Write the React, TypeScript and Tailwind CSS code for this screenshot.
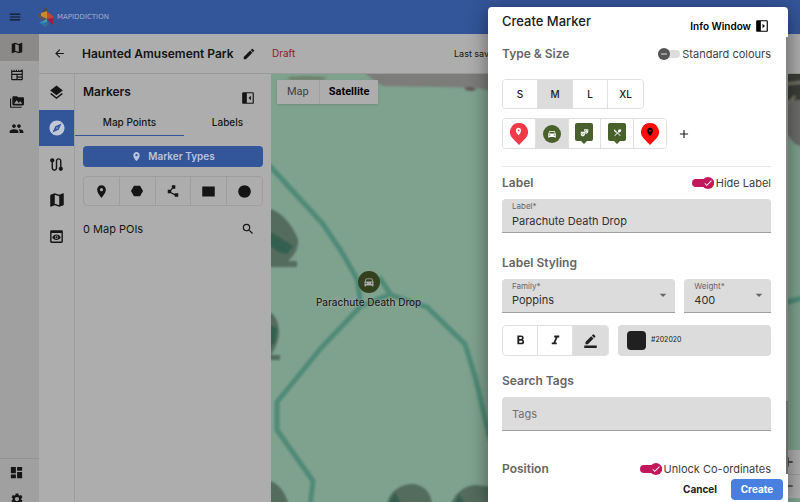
import React, { useState } from "react";
import {
  MdAdd,
  MdArrowBack,
  MdArrowDropDown,
  MdBorderColor,
  MdCheck,
  MdCircle,
  MdDashboard,
  MdEdit,
  MdExplore,
  MdFormatBold,
  MdFormatItalic,
  MdHexagon,
  MdLayers,
  MdMap,
  MdMenu,
  MdPeople,
  MdPermMedia,
  MdPlace,
  MdPolyline,
  MdPreview,
  MdRectangle,
  MdRemove,
  MdRestaurantMenu,
  MdRoute,
  MdSearch,
  MdSettings,
  MdTheaterComedy,
} from "react-icons/md";

interface SwitchProps {
  label: string;
  checked: boolean;
  onChange: (checked: boolean) => void;
}

function Switch({ label, checked, onChange }: SwitchProps) {
  return (
    <label className="relative flex cursor-pointer items-center gap-0.5 text-[11px] leading-[10px] text-[#404040]">
      <input
        type="checkbox"
        role="switch"
        checked={checked}
        onChange={(e) => onChange(e.target.checked)}
        className="peer absolute opacity-0"
      />
      {checked ? (
        <span className="flex h-2 w-[22px] items-center justify-end rounded-full bg-[#c2185b]">
          <span className="flex size-3 items-center justify-center rounded-full bg-[#c2185b] text-white">
            <MdCheck size={10} />
          </span>
        </span>
      ) : (
        <span className="flex h-2 w-[22px] items-center rounded-full bg-[#dcdcdc]">
          <span className="flex size-3 items-center justify-center rounded-full bg-[#555] text-white">
            <MdRemove size={10} />
          </span>
        </span>
      )}
      {label}
    </label>
  );
}

// 패널 접기/펼치기 아이콘
function PanelIcon({ flipped = false }: { flipped?: boolean }) {
  return (
    <svg viewBox="0 0 24 24" className="size-[14px]" fill="currentColor">
      <path
        fillRule="evenodd"
        d="M4 2h16a2 2 0 0 1 2 2v16a2 2 0 0 1-2 2H4a2 2 0 0 1-2-2V4a2 2 0 0 1 2-2Zm6 2v16h10V4H10Z"
      />
      <path d={flipped ? "M13 8l4 4-4 4V8Z" : "M17 8l-4 4 4 4V8Z"} />
    </svg>
  );
}

function CarIcon({ size }: { size: number }) {
  return (
    <svg viewBox="0 0 24 24" width={size} height={size} fill="currentColor" fillRule="evenodd">
      <path d="M18.92 6.01C18.72 5.42 18.16 5 17.5 5h-11c-.66 0-1.21.42-1.42 1.01L3 12v8c0 .55.45 1 1 1h1c.55 0 1-.45 1-1v-1h12v1c0 .55.45 1 1 1h1c.55 0 1-.45 1-1v-8l-2.08-5.99ZM6.5 16a1.500 1.500 0 1 1 0-3 1.500 1.500 0 0 1 0 3Zm11 0a1.500 1.500 0 1 1 0-3 1.500 1.500 0 0 1 0 3ZM5 11l1.500-4.500h11L19 11H5Z" />
    </svg>
  );
}

function PagesIcon() {
  return (
    <svg viewBox="0 0 24 24" className="size-[14px]" fill="currentColor" fillRule="evenodd">
      <path d="M2 3h2v2h2V3h2v2h2V3h2v2h2V3h2v2h2V3h4v16a2 2 0 0 1-2 2H4a2 2 0 0 1-2-2ZM4 7v3h16V7ZM4 12v7h7v-7ZM13 12v2.500h7V12ZM13 16.500V19h7v-2.500Z" />
    </svg>
  );
}

function Logo() {
  return (
    <svg viewBox="0 0 16 20" className="h-5 w-4" aria-hidden="true">
      <path d="M9 0v7L4 4Z" fill="#4a4a48" />
      <path d="M9 4v8L3 9V6Z" fill="#c98a2c" />
      <path d="M0 6l3 1v3l6 2-3 2-6-4Z" fill="#5d554c" />
      <path d="M9 5l5 3-5 4Z" fill="#c04b2a" />
      <path d="M14 8l1 1v4l-6-1Z" fill="#b8483a" />
      <path d="M9 12l6-1v7Z" fill="#a31944" />
      <path d="M1 16l8-4v4Z" fill="#3b9fc4" />
      <path d="M1 16l8-1-1 5Z" fill="#2676ac" />
      <path d="M9 14l2 3-3 3Z" fill="#56636e" />
    </svg>
  );
}

function MapBackground() {
  return (
    <svg
      viewBox="0 0 529 428"
      preserveAspectRatio="xMinYMin slice"
      className="absolute inset-0 h-full w-full"
      aria-hidden="true"
    >
      <defs>
        <filter id="soft">
          <feGaussianBlur stdDeviation="1" />
        </filter>
      </defs>
      <rect width="529" height="428" fill="#7fa28e" />
      <g filter="url(#soft)">
        <path d="M90-4h450v22H222l-14-4-34-1-62-1L100 4Z" fill="#7b7b7a" />
        <path d="M16 3l20-1 20 1-4 3H20Z" fill="#70806a" />
        <path d="M193 14l6-1 7 2-5 2-6-1Z" fill="#5f5550" />
        <path d="M514-4h20v30h-20Z" fill="#3a3c38" />
        <path d="M514 26h20v48l-10-4-10-12Z" fill="#6c6c6a" />
        <path d="M514 10l20-2M514 34l10-12" stroke="#777568" strokeWidth="3" />
        <g fill="#526c5d">
          <path d="M-4 134C10 136 22 152 27 165c1 10-5 18-10 22h9v6H-4Z" />
          <path d="M-4 236c8 4 12 12 12 22 0 10-6 20-8 23h9v5H-4Z" />
          <path d="M-4 406c10 2 18 10 22 26H-4Z" />
          <path d="M116 430c2-10 10-19 24-20 12 0 20 8 21 20Z" />
          <path d="M180 430c4-10 12-18 24-19l30 3v18Z" />
        </g>
        <g fill="#315e50">
          <path d="M-4 156l10 6 16 10-6 8-8-2-12-8Z" />
          <path d="M-4 250l10 4-2 14-8 8Z" />
          <path d="M118 430l6-12 6 12ZM184 430l4-10 6 10Z" />
        </g>
        <g
          fill="none"
          stroke="#4f8a78"
          strokeWidth="5"
          strokeLinejoin="round"
        >
          <path d="M-2 91l20 22 34 37 20 30 14 25 4 27L50 274 6 328v28l36 51-3 26" />
          <path d="M108 203l12 18 36 12 38 37 11 36 14 60M90 232l30-12" />
          <path d="M505 231l30-8" />
        </g>
      </g>
    </svg>
  );
}

function MarkerPin({ color, children }: { color: string; children: React.ReactNode }) {
  return (
    <span className="relative flex h-[22px] w-[18px] justify-center">
      <svg viewBox="0 0 18 22" className="absolute inset-0" fill={color}>
        <path d="M9 0a9 9 0 0 0-6.500 15.200L9 22l6.500-6.800A9 9 0 0 0 9 0Z" />
      </svg>
      <span className="relative mt-1">{children}</span>
    </span>
  );
}

function MarkerSquare({ children }: { children: React.ReactNode }) {
  return (
    <span className="relative flex h-[22px] w-[18px] justify-center text-white">
      <svg viewBox="0 0 18 22" className="absolute inset-0" fill="#48602c">
        <path d="M2 0h14a2 2 0 0 1 2 2v14a2 2 0 0 1-2 2h-4l-3 3-3-3H2a2 2 0 0 1-2-2V2a2 2 0 0 1 2-2Z" />
      </svg>
      <span className="relative mt-[5px]">{children}</span>
    </span>
  );
}

const navItems = [
  { label: "Maps", icon: <MdMap size={14} /> },
  { label: "Pages", icon: <PagesIcon /> },
  { label: "Media", icon: <MdPermMedia size={14} /> },
  { label: "People", icon: <MdPeople size={15} /> },
];

const toolItems = [
  { label: "Layers", icon: <MdLayers size={17} /> },
  { label: "Markers", icon: <MdExplore size={18} /> },
  { label: "Routes", icon: <MdRoute size={17} /> },
  { label: "Map style", icon: <MdMap size={18} /> },
  { label: "Preview", icon: <MdPreview size={17} /> },
];

const shapeItems = [
  { label: "Point", icon: <MdPlace size={15} /> },
  { label: "Polygon", icon: <MdHexagon size={14} /> },
  { label: "Line", icon: <MdPolyline size={14} /> },
  { label: "Rectangle", icon: <MdRectangle size={15} /> },
  { label: "Circle", icon: <MdCircle size={15} /> },
];

const markerItems = [
  { label: "Red pin", icon: <MarkerPin color="#f03a47"><MdPlace size={9} className="text-white" /></MarkerPin> },
  {
    label: "Car",
    icon: (
      <span className="flex size-[18px] items-center justify-center rounded-full bg-[#48602c] text-white">
        <CarIcon size={10} />
      </span>
    ),
  },
  { label: "Theatre", icon: <MarkerSquare><MdTheaterComedy size={9} /></MarkerSquare> },
  { label: "Restaurant", icon: <MarkerSquare><MdRestaurantMenu size={9} /></MarkerSquare> },
  { label: "Place", icon: <MarkerPin color="#ff0d0d"><MdPlace size={10} className="text-black" /></MarkerPin> },
];

function CreateMarkerDialog() {
  const [size, setSize] = useState("M");
  const [marker, setMarker] = useState("Car");
  const [standard, setStandard] = useState(false);
  const [hideLabel, setHideLabel] = useState(true);
  const [unlocked, setUnlocked] = useState(true);
  const [label, setLabel] = useState("Parachute Death Drop");

  return (
    <div
      role="dialog"
      aria-label="Create Marker"
      className="absolute top-[7px] right-3 bottom-0 flex w-[300px] flex-col rounded-t bg-white shadow-[0_4px_20px_rgba(0,0,0,0.45)]"
    >
      <header className="flex h-[30px] shrink-0 items-center justify-between pr-[19px] pl-3.5">
        <h2 className="text-[13px] font-medium text-[#202020]">Create Marker</h2>
        <button className="mt-2 flex items-center gap-1 text-[10px] font-semibold text-black">
          Info Window
          <PanelIcon flipped />
        </button>
      </header>

      <div className="flex min-h-0 flex-1">
        <div className="min-w-0 flex-1 pr-[15px] pl-3.5 text-[#666]">
          <div className="flex h-[34px] items-center justify-between">
            <h3 className="text-xs font-semibold">Type &amp; Size</h3>
            <Switch label="Standard colours" checked={standard} onChange={setStandard} />
          </div>

          <div className="mt-2 flex w-fit divide-x divide-[#e0e0e0] overflow-hidden rounded-sm border border-[#e0e0e0]">
            {["S", "M", "L", "XL"].map((s) => (
              <button
                key={s}
                onClick={() => setSize(s)}
                className={`h-7 w-[35px] text-[10px] font-medium text-[#202020] ${s === size ? "bg-[#dcdcdc]" : "bg-white"}`}
              >
                {s}
              </button>
            ))}
          </div>

          <div className="mt-[9px] flex items-center">
            <div className="flex w-[165px] divide-x divide-[#e0e0e0] overflow-hidden rounded-sm border border-[#e0e0e0]">
              {markerItems.map((item) => (
                <button
                  key={item.label}
                  aria-label={item.label}
                  onClick={() => setMarker(item.label)}
                  className={`flex h-[29px] flex-1 items-center justify-center ${item.label === marker ? "bg-[#dcdcdc]" : "bg-white"}`}
                >
                  {item.icon}
                </button>
              ))}
            </div>
            <button aria-label="Add marker type" className="ml-2.5 text-[#202020]">
              <MdAdd size={14} />
            </button>
          </div>

          <hr className="mt-[17px] border-[#e8e8e8]" />

          <div className="flex h-8 items-center justify-between">
            <h3 className="text-xs font-semibold">Label</h3>
            <Switch label="Hide Label" checked={hideLabel} onChange={setHideLabel} />
          </div>
          <label className="flex h-[34px] flex-col rounded-t-sm border-b border-[#a0a0a0] bg-[#dcdcdc] px-2.5 pt-[3px]">
            <span className="text-[8px] leading-[8px]">Label*</span>
            <input
              value={label}
              onChange={(e) => setLabel(e.target.value)}
              className="mt-[3px] w-full bg-transparent text-[11px] text-[#303030] outline-none"
            />
          </label>

          <h3 className="mt-[22px] text-xs font-semibold">Label Styling</h3>
          <div className="mt-2 grid grid-cols-[2fr_1fr] gap-[9px]">
            <label className="relative flex h-[34px] flex-col rounded-t-sm border-b border-[#a0a0a0] bg-[#dcdcdc] px-2.5 pt-[3px]">
              <span className="text-[8px] leading-[8px]">Family*</span>
              <select className="mt-0.5 appearance-none bg-transparent text-[11px] text-[#303030] outline-none">
                <option>Poppins</option>
              </select>
              <MdArrowDropDown size={16} className="pointer-events-none absolute top-2 right-1" />
            </label>
            <label className="relative flex h-[34px] flex-col rounded-t-sm border-b border-[#a0a0a0] bg-[#dcdcdc] px-2.5 pt-[3px]">
              <span className="text-[8px] leading-[8px]">Weight*</span>
              <select className="mt-0.5 appearance-none bg-transparent text-[11px] text-[#303030] outline-none">
                <option>400</option>
              </select>
              <MdArrowDropDown size={16} className="pointer-events-none absolute top-2 right-1" />
            </label>
          </div>

          <div className="mt-3 flex gap-[9px]">
            <div className="flex divide-x divide-[#e0e0e0] overflow-hidden rounded-sm border border-[#e0e0e0] text-[#202020]">
              <button aria-label="Bold" className="flex h-[29px] w-[35px] items-center justify-center">
                <MdFormatBold size={15} />
              </button>
              <button aria-label="Italic" className="flex h-[29px] w-[35px] items-center justify-center">
                <MdFormatItalic size={15} />
              </button>
              <button aria-label="Outline colour" className="flex h-[29px] w-[35px] items-center justify-center bg-[#dcdcdc]">
                <MdBorderColor size={15} />
              </button>
            </div>
            <button className="flex flex-1 items-center gap-[5px] rounded-sm bg-[#dcdcdc] px-[9px] text-[7px] text-[#202020]">
              <span className="size-[19px] rounded-sm bg-[#202020]" />
              #202020
            </button>
          </div>

          <h3 className="mt-[17px] text-xs font-semibold">Search Tags</h3>
          <input
            aria-label="Tags"
            placeholder="Tags"
            className="mt-2 h-[34px] w-full rounded-t-sm border-b border-[#a0a0a0] bg-[#dcdcdc] px-2.5 text-[11px] outline-none placeholder:text-[#707070]"
          />

          <div className="mt-[33px] flex h-2.5 items-center justify-between">
            <h3 className="text-xs leading-[10px] font-semibold">Position</h3>
            <Switch label="Unlock Co-ordinates" checked={unlocked} onChange={setUnlocked} />
          </div>
        </div>
        <div className="flex w-0.5 flex-col bg-[#6a6a6a]">
          <div className="h-5/6 bg-[#848484]" />
        </div>
      </div>

      <footer className="flex h-7 shrink-0 items-start justify-end gap-3.5 pt-[5px] pr-[5px] text-[10px] font-bold">
        <button className="h-[21px] text-[#202020]">Cancel</button>
        <button className="h-[21px] w-[52px] rounded-sm bg-[#487fe0] text-white">Create</button>
      </footer>
    </div>
  );
}

export default function App() {
  const [tab, setTab] = useState("Map Points");

  return (
    <div className="relative flex h-screen flex-col overflow-hidden bg-[#adadad] font-[Inter,sans-serif] text-[#151515]">
      <header className="flex h-[34px] shrink-0 items-center bg-[#335599]">
        <button aria-label="Menu" className="ml-2 text-[#101828]">
          <MdMenu size={14} />
        </button>
        <div className="ml-4 flex items-center gap-[3px] font-['DejaVu_Sans',sans-serif] text-[7px] text-[#a0afd0]">
          <Logo />
          MAPIDDICTION
        </div>
      </header>

      <div className="flex min-h-0 flex-1">
        <nav className="flex w-[39px] shrink-0 flex-col bg-[#a0a0a0]">
          {navItems.map((item, index) => (
            <a
              key={item.label}
              href="#"
              aria-label={item.label}
              className={`flex h-[27px] items-center justify-center pr-1.5 ${index === 0 ? "bg-[#8b8a88]" : ""}`}
            >
              {item.icon}
            </a>
          ))}
          <div className="mt-auto border-t border-[#939393]">
            <a href="#" aria-label="Dashboard" className="flex h-[27px] items-center justify-center pr-1.5">
              <MdDashboard size={15} />
            </a>
            <a href="#" aria-label="Settings" className="flex h-4 items-start justify-center overflow-hidden pr-1.5">
              <MdSettings size={14} className="mt-1.5 shrink-0" />
            </a>
          </div>
        </nav>

        <div className="flex min-w-0 flex-1 flex-col">
          <div className="flex h-10 shrink-0 items-center border-b border-[#999] text-[10px]">
            <button aria-label="Back" className="ml-3.5">
              <MdArrowBack size={13} />
            </button>
            <h1 className="ml-4 w-[148px] text-xs font-semibold whitespace-nowrap">Haunted Amusement Park</h1>
            <button aria-label="Edit name" className="ml-3">
              <MdEdit size={14} />
            </button>
            <span className="ml-4 w-6 text-[#93152b]">Draft</span>
            <span className="ml-[158px] text-[9px]">Last sav</span>
          </div>

          <div className="flex min-h-0 flex-1">
            <div className="flex w-9 shrink-0 flex-col border-r border-[#9e9e9e]">
              {toolItems.map((item, index) => (
                <button
                  key={item.label}
                  aria-label={item.label}
                  className={`flex h-9 items-center justify-center ${index === 1 ? "bg-[#335599] text-[#c0c8d8]" : ""}`}
                >
                  {item.icon}
                </button>
              ))}
            </div>

            <section className="w-[196px] shrink-0">
              <div className="flex h-9 items-center justify-between pr-4 pl-2">
                <h2 className="text-xs font-semibold">Markers</h2>
                <button aria-label="Collapse panel" className="mt-3">
                  <PanelIcon />
                </button>
              </div>
              <div role="tablist" className="flex h-[26px] text-[10px] font-medium">
                {["Map Points", "Labels"].map((name) => (
                  <button
                    key={name}
                    role="tab"
                    aria-selected={tab === name}
                    onClick={() => setTab(name)}
                    className={`border-b ${name === "Labels" ? "flex-[4]" : "flex-[5]"} ${tab === name ? "border-[#335599]" : "border-transparent"}`}
                  >
                    {name}
                  </button>
                ))}
              </div>
              <div className="pt-[10px] pr-2 pl-2">
                <button className="flex h-[21px] w-full items-center justify-center gap-1.5 rounded-sm bg-[#335599] text-[10px] font-semibold text-[#b9c4dc]">
                  <MdPlace size={11} />
                  Marker Types
                </button>
                <div className="mt-[9px] flex divide-x divide-[#9e9e9e] rounded-sm border border-[#9e9e9e]">
                  {shapeItems.map((item) => (
                    <button key={item.label} aria-label={item.label} className="flex h-7 flex-1 items-center justify-center">
                      {item.icon}
                    </button>
                  ))}
                </div>
                <div className="mt-[15px] flex items-center justify-between pr-2 text-[11px]">
                  0 Map POIs
                  <button aria-label="Search">
                    <MdSearch size={14} />
                  </button>
                </div>
              </div>
            </section>

            <main className="relative min-w-0 flex-1 overflow-hidden">
              <MapBackground />
              <div className="absolute top-[6px] left-[6px] flex h-6 divide-x divide-[#a0a0a0] bg-[#adadad] font-[Roboto,sans-serif] text-[11px] shadow-sm">
                <button className="px-2.5 text-[#404040]">Map</button>
                <button className="px-[9px] font-bold text-black">Satellite</button>
              </div>
              <div className="absolute top-[197px] left-[45px] flex flex-col items-center gap-0.5">
                <span className="flex size-[22px] items-center justify-center rounded-full bg-[#34411f] text-[#adadad]">
                  <CarIcon size={12} />
                </span>
                <span className="text-[10px] font-medium text-[#202020] [text-shadow:0_0_2px_#c0c0c0]">
                  Parachute Death Drop
                </span>
              </div>
              <div className="absolute right-0 bottom-1 flex h-12 w-6 flex-col divide-y divide-[#999] bg-[#adadad] text-[#303030]">
                <button aria-label="Zoom in" className="flex flex-1 items-center justify-center">
                  <MdAdd size={16} />
                </button>
                <button aria-label="Zoom out" className="flex flex-1 items-center justify-center">
                  <MdRemove size={16} />
                </button>
              </div>
            </main>
          </div>
        </div>
      </div>

      <CreateMarkerDialog />
    </div>
  );
}
